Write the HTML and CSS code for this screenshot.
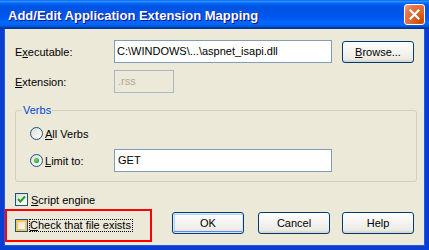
FILE: index.html
```html
<!DOCTYPE html>
<html>
<head>
<meta charset="utf-8">
<link rel="stylesheet" href="styles.css">
</head>
<body>
<div class="window">
  <div class="titlebar">
    <span class="title">Add/Edit Application Extension Mapping</span>
    <span class="close">
      <svg width="11" height="11" viewBox="0 0 11 11"><path d="M1.5 1.5 L9.5 9.5 M9.5 1.5 L1.5 9.5" stroke="#fff" stroke-width="2.2" stroke-linecap="square"/></svg>
    </span>
  </div>
  <div class="content">
    <div class="row">
      <span class="label">E<u>x</u>ecutable:</span>
      <div class="input input-exe">C:\WINDOWS\...\aspnet_isapi.dll</div>
      <button class="btn btn-browse"><u>B</u>rowse...</button>
    </div>
    <div class="row row-ext">
      <span class="label"><u>E</u>xtension:</span>
      <div class="input input-ext">.rss</div>
    </div>
    <fieldset class="group">
      <legend>Verbs</legend>
      <div class="radio-row">
        <span class="radio"></span>
        <span class="opt-label"><u>A</u>ll Verbs</span>
      </div>
      <div class="radio-row radio-row2">
        <span class="radio checked"></span>
        <span class="opt-label limit"><u>L</u>imit to:</span>
        <div class="input input-get">GET</div>
      </div>
    </fieldset>
    <div class="check-row">
      <span class="checkbox">
        <svg width="11" height="11" viewBox="0 0 11 11"><path d="M2 5 L4.3 7.5 L9 2.5" fill="none" stroke="#21A121" stroke-width="2"/></svg>
      </span>
      <span class="opt-label"><u>S</u>cript engine</span>
    </div>
    <div class="bottom-row">
      <div class="highlight">
        <span class="checkbox hover"></span>
        <span class="focus"><u>C</u>heck that file exists</span>
      </div>
      <button class="btn btn-ok">OK</button>
      <button class="btn btn-cancel">Cancel</button>
      <button class="btn btn-help">Help</button>
    </div>
  </div>
</div>
</body>
</html>
```

FILE: styles.css
```css
body {
  margin: 0;
  font-family: "Liberation Sans", Arial, sans-serif;
  font-size: 11px;
  color: #000;
}
.window {
  width: 429px;
  height: 250px;
  display: flex;
  flex-direction: column;
  overflow: hidden;
}
.titlebar {
  height: 29px;
  flex: none;
  display: flex;
  align-items: center;
  justify-content: space-between;
  background: linear-gradient(to bottom, #0058EE 0%, #3593FF 4%, #288EFF 6%, #127DFF 8%, #036FFC 10%, #0262EE 14%, #0057E5 20%, #0054E3 24%, #0055EB 56%, #005BF5 66%, #026AFE 76%, #0062EF 86%, #0052D6 92%, #0040AB 94%, #003092 100%);
}
.title {
  color: #fff;
  font-weight: bold;
  font-size: 13px;
  padding-left: 8px;
  padding-top: 1px;
  text-shadow: 1px 1px #0F1089;
}
.close {
  width: 21px;
  height: 21px;
  box-sizing: border-box;
  margin-right: 4px;
  border: 1px solid #fff;
  border-radius: 3px;
  background: radial-gradient(circle at 85% 85%, #CC4600 0%, #DC6527 40%, #E5734A 70%, #F0A488 100%);
  display: flex;
  align-items: center;
  justify-content: center;
}
.content {
  flex: 1;
  background: #ECE9D8;
  border: solid #0A3DD2;
  border-width: 0 4px 4px 4px;
  box-shadow: inset 1px 0 #1B5BE8, inset -1px 0 #1B5BE8, inset 0 -1px #1B5BE8;
  padding: 11px 0 0 11px;
}
.row {
  display: flex;
  align-items: center;
  height: 23px;
}
.row-ext {
  margin-top: 7px;
}
.label {
  width: 99px;
  flex: none;
}
.input {
  box-sizing: border-box;
  height: 23px;
  line-height: 21px;
  border: 1px solid #7F9DB9;
  background: #fff;
  padding: 0 2px;
  white-space: nowrap;
  overflow: hidden;
}
.input-exe {
  width: 218px;
}
.input-ext {
  width: 60px;
  background: #ECE9D8;
  border-color: #A8B8CB;
  color: #ACA899;
  padding-left: 3px;
}
.input-get {
  width: 218px;
  padding-left: 3px;
}
.btn {
  box-sizing: border-box;
  width: 72px;
  height: 22px;
  padding: 0;
  font-family: inherit;
  font-size: 11px;
  color: #000;
  border: 1px solid #003C74;
  border-radius: 3px;
  background: linear-gradient(to bottom, #FFFFFF 0%, #F6F5F1 40%, #ECEBE6 85%, #D6D0C5 100%);
}
.btn-browse {
  margin-left: 10px;
}
.group {
  margin: 11px 0 0 0;
  width: 402px;
  box-sizing: border-box;
  border: 1px solid #D0D0BF;
  border-radius: 3px;
  padding: 10px 0 9px 14px;
}
.group legend {
  color: #0046D5;
  line-height: 13px;
  padding: 0 1px;
  margin-left: -8px;
}
.radio-row {
  display: flex;
  align-items: center;
  height: 13px;
}
.radio-row2 {
  margin-top: 9px;
  height: 23px;
}
.radio {
  width: 13px;
  height: 13px;
  box-sizing: border-box;
  border: 1px solid #1C5180;
  border-radius: 50%;
  background: linear-gradient(135deg, #DCDCD7, #FFFFFF);
  flex: none;
  display: flex;
  align-items: center;
  justify-content: center;
}
.radio.checked::after {
  content: "";
  width: 5px;
  height: 5px;
  border-radius: 50%;
  background: radial-gradient(circle at 40% 40%, #7DE07D, #21A121 70%);
}
.opt-label {
  margin-left: 2px;
}
.limit {
  width: 69px;
}
.check-row {
  display: flex;
  align-items: center;
  margin-top: 11px;
  height: 13px;
}
.checkbox {
  width: 13px;
  height: 13px;
  box-sizing: border-box;
  border: 1px solid #1C5180;
  background: linear-gradient(135deg, #DCDCD7, #FFFFFF);
  flex: none;
  display: flex;
  align-items: center;
  justify-content: center;
}
.check-row .opt-label {
  margin-left: 3px;
}
.checkbox.hover {
  box-shadow: inset 0 0 0 2px #F8C55A;
}
.bottom-row {
  display: flex;
  align-items: flex-start;
  margin-top: 3px;
  margin-left: -10px;
}
.highlight {
  width: 147px;
  height: 33px;
  box-sizing: border-box;
  border: 2px solid #FF0000;
  display: flex;
  align-items: center;
  padding-left: 8px;
}
.focus {
  margin-left: 1px;
  border: 1px dotted #000;
  line-height: 11px;
  padding: 0 1px 0 0;
}
.bottom-row .btn {
  margin-top: 3px;
}
.btn-ok {
  margin-left: 20px;
  box-shadow: inset 0 0 0 1px #CEE7FF, inset 0 -2px 0 0 #6982EE, inset 1px 1px 0 1px #BCD4F6;
}
.btn-cancel {
  margin-left: 14px;
}
.btn-help {
  margin-left: 12px;
}
```
